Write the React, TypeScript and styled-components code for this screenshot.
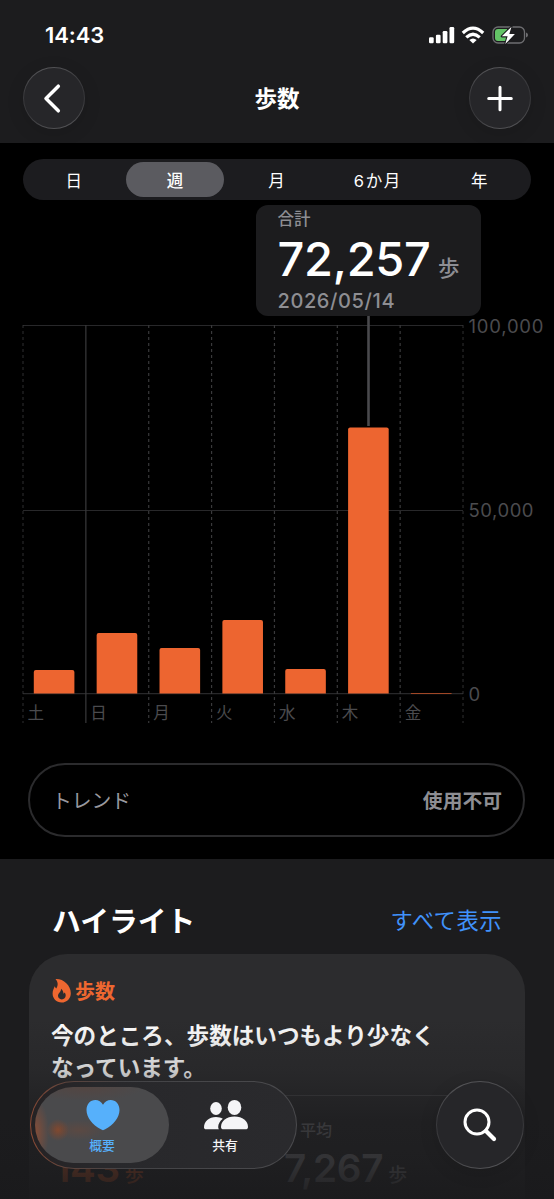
import React from "react";
import styled, { createGlobalStyle } from "styled-components";

const JP = `"Inter", "Noto Sans CJK JP", sans-serif`;

const Global = createGlobalStyle`
  *, *::before, *::after { box-sizing: border-box; }
  html, body { margin: 0; background: #1c1c1e; }
  body { font-family: ${JP}; color: #fff; overflow: hidden; }
  svg { display: block; }
  button { font: inherit; color: inherit; border: 0; padding: 0; background: none; }
`;

const Screen = styled.div`
  position: relative;
  width: 554px;
  height: 1199px;
  overflow: hidden;
  background: #000;
  display: flex;
  flex-direction: column;
`;

const Header = styled.header`
  flex: none;
  height: 143px;
  background: #1c1c1e;
`;

const StatusBar = styled.div`
  height: 67px;
  padding: 4px 26px 0 45px;
  display: flex;
  align-items: center;
  justify-content: space-between;
`;

const Clock = styled.span`
  margin-top: -1px;
  font-size: 22px;
  font-weight: 600;
  letter-spacing: -0.1px;
`;

const NavBar = styled.div`
  display: flex;
  align-items: center;
  justify-content: space-between;
  padding: 0 23px;
`;

const GlassButton = styled.button<{ $size: number }>`
  width: ${(p) => p.$size}px;
  height: ${(p) => p.$size}px;
  border-radius: 50%;
  border: 1.5px solid transparent;
  background:
    linear-gradient(#262629, #262629) padding-box,
    linear-gradient(165deg, #5c5c5f, #3b3b3e 35%, #37373a 60%, #5a5a5d) border-box;
  display: flex;
  align-items: center;
  justify-content: center;
  box-shadow: 0 4px 18px rgba(0, 0, 0, 0.12);
`;

const Title = styled.h1`
  margin: 2px 0 0;
  font-size: 22.5px;
  line-height: 30px;
  font-weight: 600;
`;

const ChartSection = styled.section`
  flex: none;
  position: relative;
  height: 716px;
  padding-top: 16px;
`;

const Segments = styled.div`
  margin: 0 23px;
  height: 41px;
  border-radius: 21px;
  background: #1c1c1f;
  padding: 3px 1px 3px 0;
  display: grid;
  grid-template-columns: repeat(5, 1fr);
`;

const Segment = styled.button<{ $active?: boolean; $spacing?: number }>`
  margin: 0 2px;
  border-radius: 18px;
  background: ${(p) => (p.$active ? "#5b5b60" : "transparent")};
  font-size: 16.5px;
  font-weight: ${(p) => (p.$active ? 500 : 400)};
  letter-spacing: ${(p) => p.$spacing ?? 0}px;
`;

const Plot = styled.div`
  height: 531px;
`;

const Tooltip = styled.div`
  position: absolute;
  left: 256px;
  top: 62px;
  width: 225px;
  height: 111px;
  border-radius: 12px;
  background: #1c1c1e;
  color: #8e8e93;
  padding: 3px 0 0 21.5px;
  font-weight: 500;
`;

const TipLabel = styled.div`
  font-size: 16.5px;
  line-height: 22px;
`;

const TipValue = styled.div`
  height: 58px;
  display: flex;
  align-items: baseline;
  line-height: 58px;
  font-size: 21.5px;
`;

const TipNumber = styled.span`
  width: 160.5px;
  color: #fff;
  font-size: 47px;
  letter-spacing: -0.3px;
`;

const TipDate = styled.div`
  font-size: 20px;
  line-height: 26px;
  letter-spacing: 0.6px;
`;

const Trend = styled.div`
  margin: 32px 29px 0 28px;
  height: 74px;
  border: 2px solid #2b2b2d;
  border-radius: 37px;
  padding: 0 21px 1px 22px;
  display: flex;
  align-items: center;
  justify-content: space-between;
  font-size: 19.8px;
  color: #98989e;
`;

const TrendState = styled.span`
  font-weight: 600;
  color: #8e8e93;
`;

const Highlights = styled.section`
  flex: 1;
  background: #1c1c1e;
  padding: 43px 29px 0;
`;

const SectionHead = styled.div`
  height: 52px;
  padding: 0 23px 0 23px;
  display: flex;
  align-items: flex-start;
  justify-content: space-between;
  line-height: 38px;
`;

const SectionTitle = styled.h2`
  margin: 1px 0 0;
  font-size: 28.8px;
  font-weight: 700;
`;

const LinkText = styled.span`
  color: #4092fb;
  font-size: 22.3px;
  letter-spacing: 0.5px;
`;

const Card = styled.article`
  height: 310px;
  border-radius: 38px 38px 0 0;
  background: #2c2c2e;
  padding: 23px 23px 0;
`;

const CardLabel = styled.div`
  display: flex;
  align-items: center;
  gap: 3px;
  color: #ee6730;
  font-size: 20px;
  line-height: 30px;
  font-weight: 600;

  svg {
    margin-top: -3px;
  }
`;

const CardText = styled.p`
  margin: 13px 0 0 -1px;
  font-size: 22.6px;
  line-height: 32px;
  font-weight: 600;
`;

const Divider = styled.div`
  height: 1px;
  margin-top: 11px;
  background: #454548;
`;

const Metrics = styled.div`
  display: grid;
  grid-template-columns: 232px 1fr;
  padding-top: 21px;
`;

const Metric = styled.div<{ $tone: string }>`
  color: ${(p) => p.$tone};
  font-size: 16px;
  font-weight: 500;
`;

const MetricLabel = styled.div`
  height: 27px;
  line-height: 27px;
  padding-left: 16px;
`;

const MetricValue = styled.div`
  display: flex;
  align-items: baseline;
  gap: 5px;
  font-size: 19px;
  line-height: 48px;
`;

const MetricNumber = styled.span<{ $inset?: number }>`
  padding-left: ${(p) => p.$inset ?? 0}px;
  font-size: 38.6px;
  font-weight: 600;
  letter-spacing: -0.3px;
`;

const Fade = styled.div`
  position: absolute;
  left: 0;
  right: 0;
  bottom: 0;
  height: 180px;
  background: linear-gradient(
    rgba(28, 28, 30, 0),
    rgba(28, 28, 30, 0.22) 28%,
    rgba(28, 28, 30, 0.74) 56%,
    rgba(27, 27, 29, 0.8) 80%,
    rgba(26, 26, 28, 0.94)
  );
`;

const BottomBar = styled.nav`
  position: absolute;
  left: 30px;
  right: 30px;
  bottom: 30px;
  display: flex;
  justify-content: space-between;
`;

const Tabs = styled.div`
  width: 267px;
  height: 88px;
  border-radius: 44px;
  border: 1.5px solid transparent;
  background:
    linear-gradient(90deg, #252224, #28282b 25%, #2a2a2d) padding-box,
    linear-gradient(90deg, #8a4a35, #5c443d 14%, #434346 35%, #4a4a4d) border-box;
  padding: 5px 4px;
  display: flex;
`;

const Tab = styled.button<{ $active?: boolean }>`
  width: ${(p) => (p.$active ? 134 : 112)}px;
  height: 76px;
  border-radius: 38px;
  background: ${(p) =>
    p.$active
      ? `radial-gradient(ellipse 14px 34px at 0 60%, rgba(190, 80, 35, 0.5), transparent),
         radial-gradient(circle 11px at 23px 43px, rgba(150, 72, 36, 0.7), rgba(140, 70, 38, 0.45) 45%, transparent),
         radial-gradient(ellipse 26px 10px at 44px 43px, rgba(130, 70, 44, 0.3), transparent),
         radial-gradient(ellipse 60px 14px at 50px 0, rgba(110, 55, 35, 0.25), transparent),
         #4a4a4c`
      : "transparent"};
  color: ${(p) => (p.$active ? "#56b0fb" : "#f5f5f7")};
  display: flex;
  flex-direction: column;
  align-items: center;
  padding-top: 12px;
  gap: 4px;
  font-size: 12.8px;
  line-height: 22px;
  font-weight: 500;

  & > svg {
    margin-left: 1px;
  }
`;

const days = [
  { label: "土", top: 670 },
  { label: "日", top: 633 },
  { label: "月", top: 648 },
  { label: "火", top: 620 },
  { label: "水", top: 669 },
  { label: "木", top: 427.5 },
  { label: "金", top: 693 },
];
const step = 62.86;
const left = 23;

function StepsChart() {
  return (
    <svg width="554" height="531" viewBox="0 200 554 531" fontFamily={JP}>
      <g stroke="#28282a" strokeWidth="1.2">
        <path d="M23 325.5H463M23 510.5H463M23 693.7H463" />
      </g>
      {Array.from({ length: 8 }, (_, i) => (
        <line
          key={i}
          x1={left + i * step}
          x2={left + i * step}
          y1="325"
          y2="723"
          stroke="#39393b"
          strokeWidth="1.2"
          strokeDasharray={i === 1 ? undefined : "3 3"}
          opacity={i === 0 || i === 7 ? 0.7 : 1}
        />
      ))}
      <path d="M368.5 316V426" stroke="#4a4a4d" strokeWidth="2.6" />
      {days.map((d, i) => (
        <g key={d.label}>
          <path
            fill={d.top > 690 ? "#a04726" : "#ed6530"}
            d={
              d.top > 690
                ? `M${left + i * step + 10.8} 693h40.6v1h-40.6z`
                : `M${left + i * step + 10.8} 693.5V${d.top + 2}q0-2 2-2h36.6q2 0 2 2V693.5z`
            }
          />
          <text x={left + i * step + 4.5} y="718.5" fontSize="16.5" fill="#4b4b4e">
            {d.label}
          </text>
        </g>
      ))}
      <g fontSize="18.5" fill="#4b4b4e">
        <text x="468.5" y="332.5" textLength="75">100,000</text>
        <text x="468.5" y="517" textLength="65">50,000</text>
        <text x="468.5" y="700.5">0</text>
      </g>
    </svg>
  );
}

function StatusIcons() {
  return (
    <svg width="102" height="24" viewBox="426 24 102 24">
      <g fill="#fff">
        <rect x="429" y="37.3" width="4.7" height="5.9" rx="1.2" />
        <rect x="435.9" y="34.7" width="4.7" height="8.5" rx="1.2" />
        <rect x="442.7" y="31" width="4.7" height="12.2" rx="1.2" />
        <rect x="449.5" y="27" width="4.7" height="16.2" rx="1.2" />
      </g>
      <g fill="none" stroke="#fff" strokeWidth="3.2">
        <path d="M462.8 33Q473 23.2 483.2 33" />
        <path d="M466.300 37.400Q473 31 479.700 37.400" />
      </g>
      <path d="M469.300 40.100Q473 36.800 476.700 40.100L473 43.500Z" fill="#fff" />
      <rect x="493" y="27" width="31.500" height="16" rx="5" fill="none" stroke="#6e6e71" strokeWidth="1.300" />
      <path d="M526 32.500q2 .8 2 2.500t-2 2.500z" fill="#6e6e71" />
      <path d="M498 29h9v12h-9q-3 0-3-3v-6q0-3 3-3z" fill="#63c466" />
      <path
        d="M511.500 26.800 501.800 36.300h5.800l-2.300 7.800L514.900 34h-5.600z"
        fill="#fff"
        stroke="#1c1c1e"
        strokeWidth="2.200"
        paintOrder="stroke"
        strokeLinejoin="round"
      />
    </svg>
  );
}

export default function App() {
  return (
    <Screen>
      <Global />
      <Header>
        <StatusBar>
          <Clock>14:43</Clock>
          <StatusIcons />
        </StatusBar>
        <NavBar>
          <GlassButton $size={62} aria-label="戻る">
            <svg width="30" height="34" viewBox="0 0 30 34">
              <path d="M19.300 5.200 7 17.500 19.300 29.800" fill="none" stroke="#fff" strokeWidth="3.500" strokeLinecap="round" strokeLinejoin="round" />
            </svg>
          </GlassButton>
          <Title>歩数</Title>
          <GlassButton $size={62} aria-label="追加">
            <svg width="30" height="30" viewBox="0 0 30 30">
              <path d="M15 4.200v22.600M3.700 15.500h22.600" stroke="#fff" strokeWidth="3" strokeLinecap="round" />
            </svg>
          </GlassButton>
        </NavBar>
      </Header>

      <ChartSection>
        <Segments>
          <Segment>日</Segment>
          <Segment $active>週</Segment>
          <Segment>月</Segment>
          <Segment $spacing={1.6}>6か月</Segment>
          <Segment>年</Segment>
        </Segments>
        <Plot>
          <StepsChart />
        </Plot>
        <Tooltip>
          <TipLabel>合計</TipLabel>
          <TipValue>
            <TipNumber>72,257</TipNumber>歩
          </TipValue>
          <TipDate>2026/05/14</TipDate>
        </Tooltip>
        <Trend>
          <span>トレンド</span>
          <TrendState>使用不可</TrendState>
        </Trend>
      </ChartSection>

      <Highlights>
        <SectionHead>
          <SectionTitle>ハイライト</SectionTitle>
          <LinkText>すべて表示</LinkText>
        </SectionHead>
        <Card>
          <CardLabel>
            <svg width="20" height="26" viewBox="0 0 20 26">
              <path
                fillRule="evenodd"
                fill="#ee6730"
                d="M3.500 1C11 .4 18.800 7 18.800 15.200c0 5.500-4 9.300-9.200 9.300S.6 20.800.6 15.600c0-3.500 1.400-5 2.100-7.300.5 1 .8 1.500 1.500 2.200C6.200 7.600 6.400 4.300 3.500 1zM9 10.700c.3 3.300-3 4.300-3 7.100 0 2.100 1.600 3.600 3.800 3.600s3.900-1.500 3.900-3.800c0-1.300-.5-2.200-1.100-3-.3.6-.6.9-1.100 1.200-.1-2.100-.8-3.900-2.500-5.100z"
              />
            </svg>
            歩数
          </CardLabel>
          <CardText>
            今のところ、歩数はいつもより少なく
            <br />
            なっています。
          </CardText>
          <Divider />
          <Metrics>
            <Metric $tone="#ee6730">
              <MetricLabel />
              <MetricValue>
                <MetricNumber $inset={2}>143</MetricNumber>歩
              </MetricValue>
            </Metric>
            <Metric $tone="#8e8e93">
              <MetricLabel>平均</MetricLabel>
              <MetricValue>
                <MetricNumber>7,267</MetricNumber>歩
              </MetricValue>
            </Metric>
          </Metrics>
        </Card>
      </Highlights>

      <Fade />
      <BottomBar>
        <Tabs>
          <Tab $active>
            <svg width="34" height="32" viewBox="0 0 34 32">
              <path
                fill="#56b0fb"
                d="M17 31.200c-.6 0-1.500-.5-2.200-.9C6.500 25.500.5 18.500.5 10.900.5 5.100 4.300 1 9.300 1c3.200 0 6 1.600 7.700 4.700C18.700 2.600 21.500 1 24.700 1c5 0 8.800 4.100 8.800 9.900 0 7.600-6 14.600-14.300 19.400-.7.400-1.600.9-2.200.9z"
              />
            </svg>
            概要
          </Tab>
          <Tab>
            <svg width="46" height="32" viewBox="0 0 46 32">
              <g fill="#f5f5f7">
                <ellipse cx="13" cy="9.500" rx="5.800" ry="6.500" />
                <path d="M1 28.500C1 22.500 6 18 13 18c2.800 0 5 .7 6.800 1.800-3 2.300-4.600 5.500-4.600 8.200 0 1 .2 1.700.7 2.300H3.200C1.800 30.300 1 29.700 1 28.500z" />
                <ellipse cx="31.500" cy="8.400" rx="6.800" ry="7.500" />
                <path d="M18 28c0-6 5.500-10.500 13.500-10.500S45 22 45 28c0 1.500-.9 2.300-2.500 2.300h-22C18.900 30.300 18 29.500 18 28z" />
              </g>
            </svg>
            共有
          </Tab>
        </Tabs>
        <GlassButton $size={88} aria-label="検索">
          <svg width="38" height="38" viewBox="0 0 38 38">
            <circle cx="16" cy="16" r="12" fill="none" stroke="#fff" strokeWidth="3" />
            <path d="M25 25 33 33" stroke="#fff" strokeWidth="4.200" strokeLinecap="round" />
          </svg>
        </GlassButton>
      </BottomBar>
    </Screen>
  );
}
